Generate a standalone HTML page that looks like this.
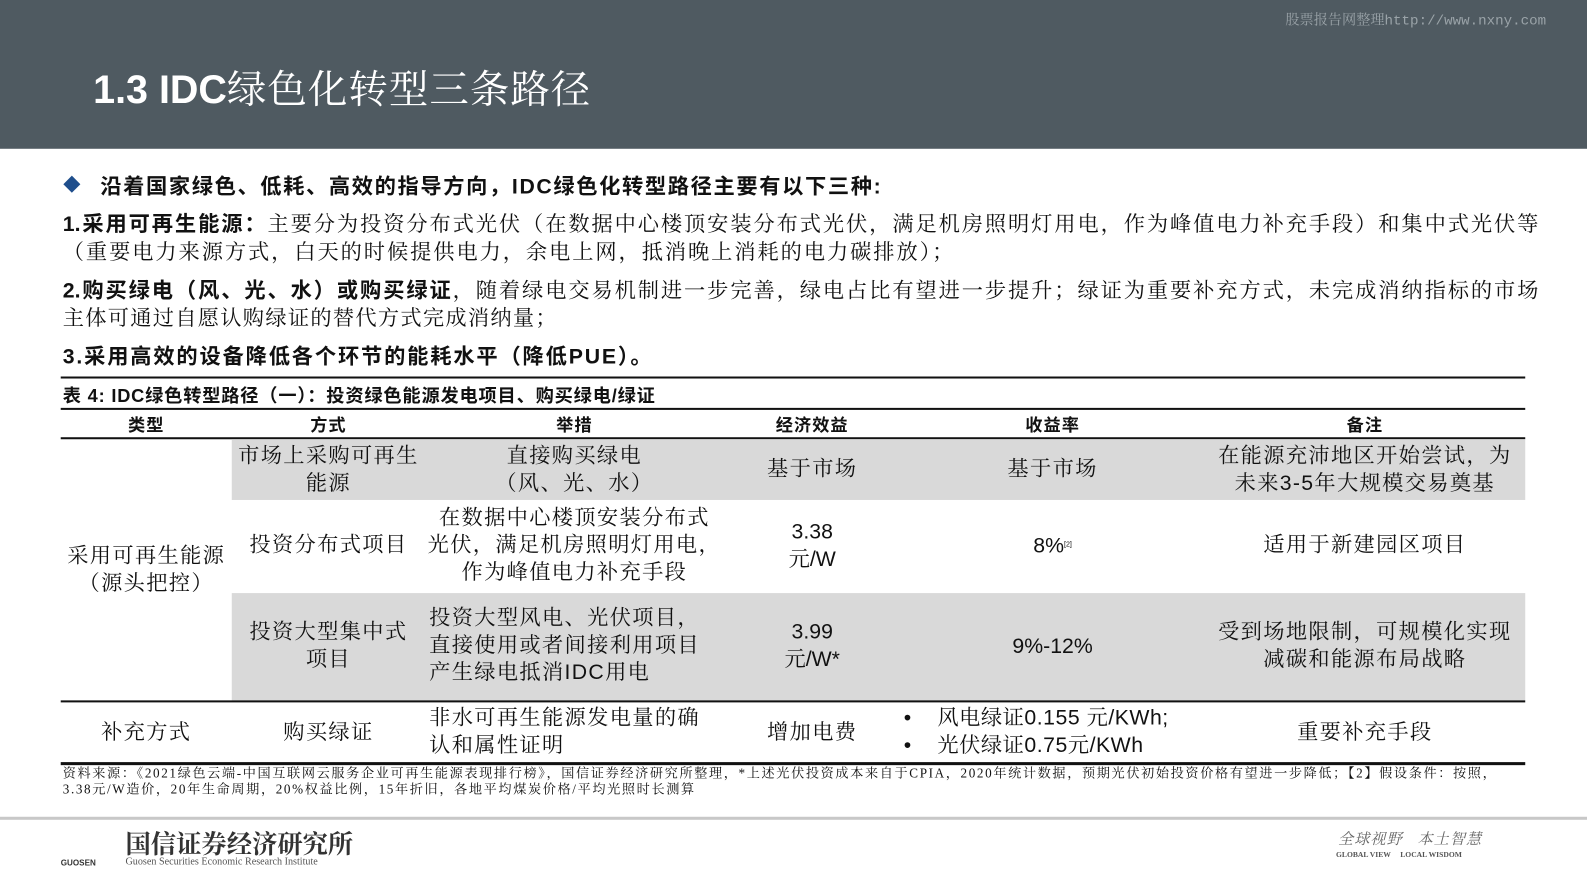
<!DOCTYPE html>
<html><head><meta charset="utf-8">
<style>
*{margin:0;padding:0;box-sizing:border-box}
body{width:1587px;height:892px;background:#fff;position:relative;overflow:hidden;font-family:"Liberation Sans","Noto Serif CJK SC",serif;color:#111}
#w{position:absolute;left:0;top:0;width:1568px;height:882px;transform:scale(1.0121);transform-origin:0 0}
.a{position:absolute;white-space:nowrap}
.hdr{position:absolute;left:0;top:0;width:1600px;height:147px;background:#4f5a61}
.ln{position:absolute;left:62px;width:1458px;font-size:21px;text-align:justify;text-align-last:justify;white-space:nowrap;font-family:"Liberation Sans","Noto Serif CJK SC",serif}
.b{font-weight:bold;font-family:"Liberation Sans","Noto Sans CJK SC",sans-serif}
.hl{position:absolute;left:60px;width:1447px;background:#111}
.g{position:absolute;background:#d9d9d9}
.c{position:absolute;text-align:center;font-size:21px;letter-spacing:1.3px;line-height:27px;white-space:nowrap;font-family:"Liberation Sans","Noto Serif CJK SC",serif}
.th{position:absolute;top:406px;font-size:17px;letter-spacing:1px;font-weight:bold;font-family:"Liberation Sans","Noto Sans CJK SC",sans-serif;text-align:center}
</style></head><body><div id="w">
<div class="hdr"></div>
<div class="a" style="left:1270px;top:9px;font-size:14px;color:#9aa3a8;font-family:'Liberation Mono','Noto Serif CJK SC',monospace">股票报告网整理http://www.nxny.com</div>
<div class="a" style="left:92px;top:58px;font-size:39px;color:#fff;font-weight:bold;font-family:'Liberation Sans','Noto Sans CJK SC',sans-serif">1.3 IDC<span style="font-weight:normal;font-family:'Noto Serif CJK SC',serif;letter-spacing:1px">绿色化转型三条路径</span></div>

<div class="a" style="left:64px;top:175px;width:14px;height:14px;background:#1f4e8c;transform:rotate(45deg) scale(0.85)"></div>
<div class="a b" style="left:99px;top:168px;font-size:21px;letter-spacing:1.6px">沿着国家绿色、低耗、高效的指导方向，IDC绿色化转型路径主要有以下三种:</div>
<div class="ln" style="top:205px"><span class="b">1.采用可再生能源：</span>主要分为投资分布式光伏（在数据中心楼顶安装分布式光伏，满足机房照明灯用电，作为峰值电力补充手段）和集中式光伏等</div>
<div class="ln" style="top:233px;width:880px">（重要电力来源方式，白天的时候提供电力，余电上网，抵消晚上消耗的电力碳排放）；</div>
<div class="ln" style="top:271px"><span class="b">2.购买绿电（风、光、水）或购买绿证</span>，随着绿电交易机制进一步完善，绿电占比有望进一步提升；绿证为重要补充方式，未完成消纳指标的市场</div>
<div class="ln" style="top:298px;width:488px">主体可通过自愿认购绿证的替代方式完成消纳量；</div>
<div class="a b" style="left:62px;top:336px;font-size:21px;letter-spacing:1.8px">3.采用高效的设备降低各个环节的能耗水平（降低PUE）。</div>

<div class="hl" style="top:372px;height:2px"></div>
<div class="a b" style="left:62px;top:377px;font-size:18px;letter-spacing:0.8px">表 4:  IDC绿色转型路径（一）：投资绿色能源发电项目、购买绿电/绿证</div>
<div class="hl" style="top:403px;height:2px"></div>
<div class="th" style="left:60px;width:169px">类型</div>
<div class="th" style="left:229px;width:191px">方式</div>
<div class="th" style="left:420px;width:295px">举措</div>
<div class="th" style="left:715px;width:175px">经济效益</div>
<div class="th" style="left:890px;width:300px">收益率</div>
<div class="th" style="left:1190px;width:317px">备注</div>
<div class="hl" style="top:432px;height:2px"></div>

<div class="g" style="left:229px;top:434px;width:1278px;height:60px"></div>
<div class="g" style="left:229px;top:586px;width:1278px;height:106px"></div>
<div class="hl" style="top:692px;height:2px"></div>
<div class="hl" style="top:753px;height:3px"></div>

<div class="c" style="left:60px;width:169px;top:536px">采用可再生能源<br>（源头把控）</div>

<div class="c" style="left:229px;width:191px;top:437px">市场上采购可再生<br>能源</div>
<div class="c" style="left:420px;width:295px;top:437px">直接购买绿电<br>（风、光、水）</div>
<div class="c" style="left:715px;width:175px;top:450px">基于市场</div>
<div class="c" style="left:890px;width:300px;top:450px">基于市场</div>
<div class="c" style="left:1190px;width:317px;top:437px">在能源充沛地区开始尝试，为<br>未来3-5年大规模交易奠基</div>

<div class="c" style="left:229px;width:191px;top:525px">投资分布式项目</div>
<div class="c" style="left:420px;width:295px;top:498px">在数据中心楼顶安装分布式<br>光伏，满足机房照明灯用电，<br>作为峰值电力补充手段</div>
<div class="c" style="left:715px;width:175px;top:512px;letter-spacing:0">3.38<br>元/W</div>
<div class="c" style="left:890px;width:300px;top:525px;letter-spacing:0">8%<span style="font-size:7px;vertical-align:6px">[2]</span></div>
<div class="c" style="left:1190px;width:317px;top:525px">适用于新建园区项目</div>

<div class="c" style="left:229px;width:191px;top:611px">投资大型集中式<br>项目</div>
<div class="c" style="left:420px;width:295px;top:597px;text-align:left;padding-left:4px">投资大型风电、光伏项目，<br>直接使用或者间接利用项目<br>产生绿电抵消IDC用电</div>
<div class="c" style="left:715px;width:175px;top:611px;letter-spacing:0">3.99<br>元/W*</div>
<div class="c" style="left:890px;width:300px;top:625px;letter-spacing:0">9%-12%</div>
<div class="c" style="left:1190px;width:317px;top:611px">受到场地限制，可规模化实现<br>减碳和能源布局战略</div>

<div class="c" style="left:60px;width:169px;top:710px">补充方式</div>
<div class="c" style="left:229px;width:191px;top:710px">购买绿证</div>
<div class="c" style="left:420px;width:295px;top:696px;text-align:left;padding-left:4px">非水可再生能源发电量的确<br>认和属性证明</div>
<div class="c" style="left:715px;width:175px;top:710px">增加电费</div>
<div class="c" style="left:893px;top:696px;text-align:left;letter-spacing:0.5px">•&nbsp;&nbsp;&nbsp;&nbsp;风电绿证0.155 元/KWh;<br>•&nbsp;&nbsp;&nbsp;&nbsp;光伏绿证0.75元/KWh</div>
<div class="c" style="left:1190px;width:317px;top:710px">重要补充手段</div>

<div class="a" style="left:62px;top:756px;font-size:13px;letter-spacing:1.6px;line-height:16px;font-family:'Liberation Serif','Noto Serif CJK SC',serif">资料来源：《2021绿色云端-中国互联网云服务企业可再生能源表现排行榜》，国信证券经济研究所整理，*上述光伏投资成本来自于CPIA，2020年统计数据，预期光伏初始投资价格有望进一步降低；【2】假设条件：按照，<br>3.38元/W造价，20年生命周期，20%权益比例，15年折旧，各地平均煤炭价格/平均光照时长测算</div>

<div class="a" style="left:0;top:807px;width:1600px;height:3px;background:#c8c8c8"></div>
<div class="a" style="left:124px;top:820px;font-size:25px;line-height:26px;font-weight:bold;color:#333;font-family:'Noto Serif CJK SC',serif">国信证券经济研究所</div>
<div class="a" style="left:60px;top:848px;font-size:8px;line-height:10px;font-weight:bold;color:#333">GUOSEN</div>
<div class="a" style="left:124px;top:846px;font-size:10px;line-height:11px;color:#555;font-family:'Liberation Serif',serif">Guosen Securities Economic Research Institute</div>
<div class="a" style="left:1322px;top:820px;font-size:15px;line-height:18px;color:#666;font-style:italic;font-family:'Noto Serif CJK SC',serif;letter-spacing:1px">全球视野&nbsp;&nbsp;&nbsp;本土智慧</div>
<div class="a" style="left:1320px;top:840px;font-size:7.5px;line-height:9px;font-weight:bold;color:#555;font-family:'Liberation Serif',serif">GLOBAL VIEW &nbsp;&nbsp;&nbsp; LOCAL WISDOM</div>
</div></body></html>
